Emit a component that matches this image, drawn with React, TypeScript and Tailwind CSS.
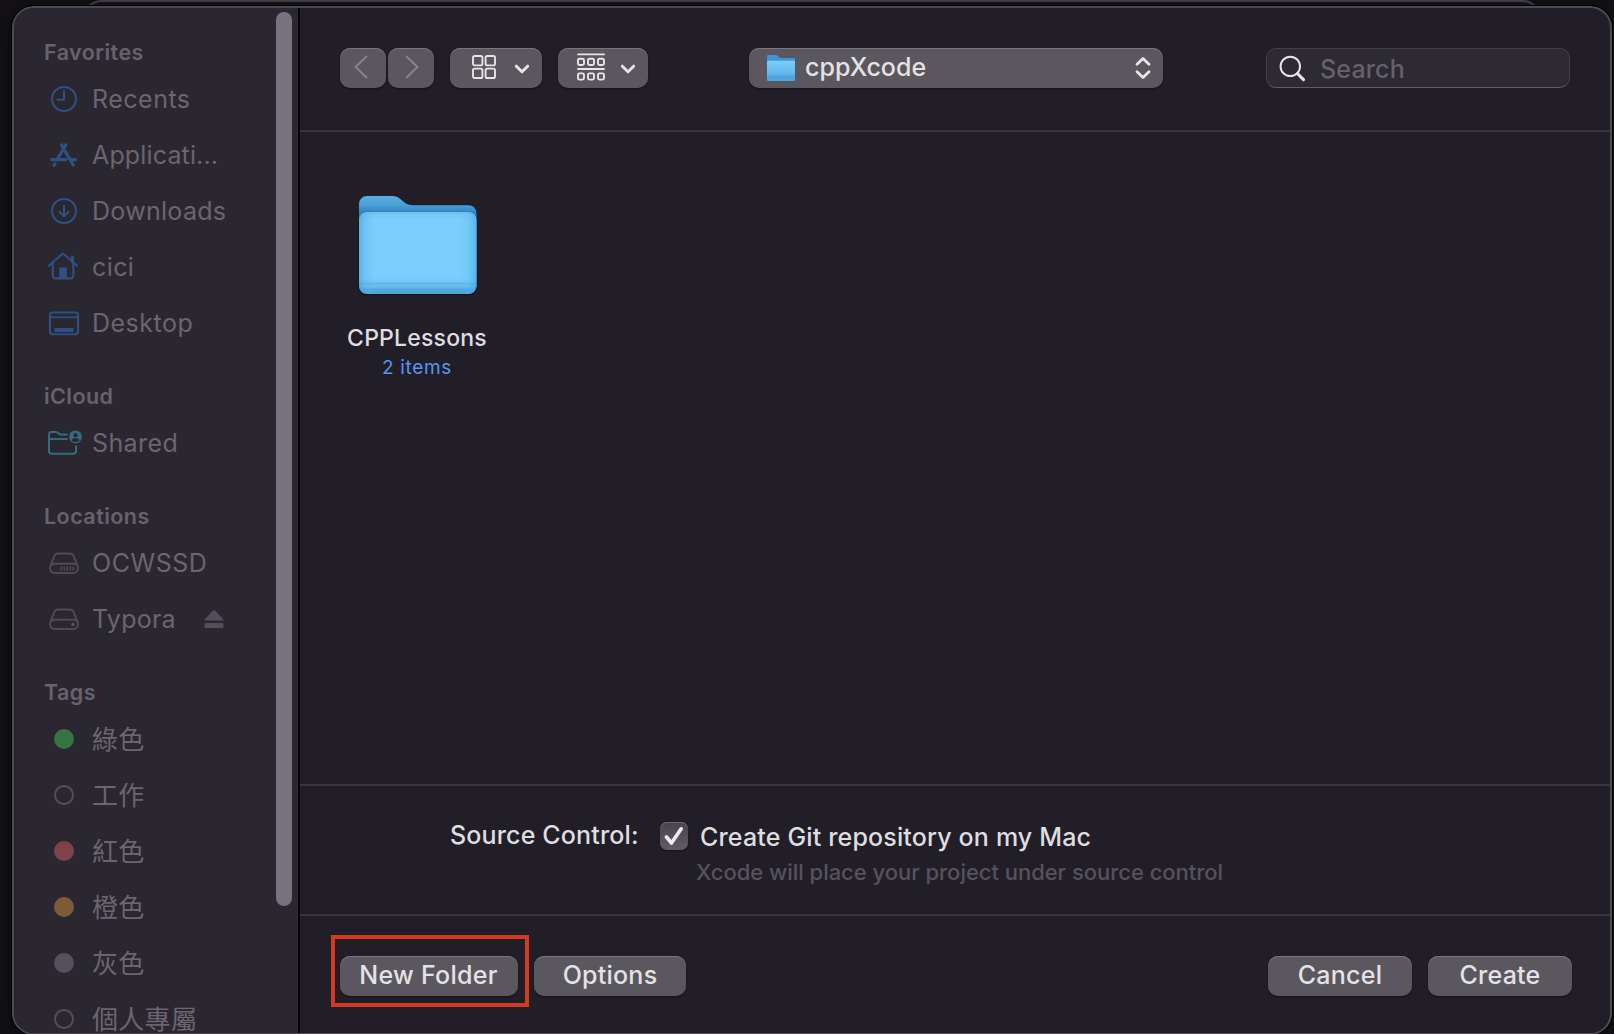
import type { ReactNode } from "react";

const ClockIcon = () => (
  <svg width="28" height="28" viewBox="0 0 28 28" fill="none" stroke="#2e5085" strokeWidth="2" strokeLinecap="round" strokeLinejoin="round">
    <circle cx="14" cy="14" r="12" />
    <path d="M14 6v8.7H7.5" />
  </svg>
);

const AppStoreIcon = () => (
  <svg width="28" height="28" viewBox="0 0 28 28" fill="none" stroke="#2e5085" strokeWidth="3.2" strokeLinecap="round">
    <path d="M1.7 18.6h14.200M21.600 18.6h3.800M11.600 3.800l1.800 2.800M15.800 3.800L7.700 17.600M15.200 10.200L23.200 24M5 22.800l-1 1.400" />
  </svg>
);

const DownloadIcon = () => (
  <svg width="28" height="28" viewBox="0 0 28 28" fill="none" stroke="#2e5085" strokeWidth="2" strokeLinecap="round" strokeLinejoin="round">
    <circle cx="14" cy="14" r="12" />
    <path d="M14 8.2v11M9.4 14.8l4.6 4.6 4.6-4.6" />
  </svg>
);

const HomeIcon = () => (
  <svg className="-mt-[3px] mr-[2px]" width="32" height="28" viewBox="0 0 32 28" fill="none" stroke="#2e5085" strokeWidth="2.100" strokeLinecap="round" strokeLinejoin="round">
    <path d="M2 13.8L14.9 2.3a1.6 1.6 0 0 1 2.2 0L30 13.8" />
    <path d="M5.800 11.5V24a2.4 2.4 0 0 0 2.4 2.4H23.900a2.4 2.4 0 0 0 2.4-2.4V11.5" />
    <path d="M12.300 26V16.2a.8.8 0 0 1 .8-.8h6a.8.8 0 0 1 .8.8V26z" fill="#2e5085" stroke="none" />
    <path d="M25.500 5v4.600" strokeWidth="3" />
  </svg>
);

const DesktopIcon = () => (
  <svg width="32" height="28" viewBox="0 0 32 28" fill="none" stroke="#2e5085" strokeWidth="2">
    <rect x="2" y="3.6" width="28" height="21.6" rx="2.6" />
    <path d="M2 8.2h28" strokeWidth="1.8" />
    <path d="M6.6 19h18.8v4H6.6z" fill="#2e5085" stroke="none" />
  </svg>
);

const SharedIcon = () => (
  <svg width="36" height="28" viewBox="0 0 36 28" fill="none" stroke="#376a7e" strokeWidth="2" strokeLinecap="butt" strokeLinejoin="round">
    <path d="M30 16.500v5.600a2.600 2.600 0 0 1-2.600 2.600H5.600A2.600 2.600 0 0 1 3 22.100V5.400A2.400 2.400 0 0 1 5.400 3h4.400c2.600 0 2.600 2.500 5.200 2.500h6.600M3 9.900h18.600" />
    <circle cx="29.500" cy="7.900" r="6.400" fill="#376a7e" stroke="none" />
    <circle cx="29.500" cy="6.200" r="2.100" fill="#2b2731" stroke="none" />
    <path d="M25.700 11.700c.3-3.600 7.300-3.600 7.600 0-1.800 1.700-5.800 1.700-7.600 0z" fill="#2b2731" stroke="none" />
  </svg>
);

const DriveIcon = ({ vents = false }: { vents?: boolean }) => (
  <svg width="32" height="28" viewBox="0 0 32 28" fill="none" stroke="#4f4a51" strokeWidth="2" strokeLinejoin="round">
    <path d="M2 19.200a4.400 4.400 0 0 1 4.400-4.400h19.200a4.400 4.400 0 0 1 4.400 4.400v0a4.700 4.700 0 0 1-4.700 4.700H6.700A4.700 4.700 0 0 1 2 19.200z" />
    <path d="M2.300 17.400L6.600 6.700C7.300 5.100 8.300 4.400 9.900 4.400h12.200c1.600 0 2.600.7 3.300 2.300l4.300 10.700" />
    {vents ? (
      <path d="M13.300 17.400v4M16.300 17.400v4M19.300 17.400v4M22.300 17.400v4M25.300 17.400v4" strokeWidth="1.700" />
    ) : (
      <circle cx="24.800" cy="19.400" r="1.700" fill="#5b555f" stroke="none" />
    )}
  </svg>
);

const EjectIcon = () => (
  <svg width="20" height="20" viewBox="0 0 20 20" fill="#534f5a">
    <path d="M9 1.600a1.400 1.400 0 0 1 2 0L19 10c.9 1 .6 1.600-.5 1.600h-17C.4 11.600.1 11 1 10z" />
    <rect x="0.500" y="14" width="19" height="5" rx="1.400" />
  </svg>
);

const Heading = ({ children }: { children: ReactNode }) => (
  <div className="flex h-[64px] shrink-0 items-end pb-[4px] pl-[30px] text-[21.5px] font-semibold leading-[30px] tracking-[0.45px] text-[#67626c]">
    {children}
  </div>
);

const Row = ({ icon, children, text = "tracking-[0.4px]" }: { icon: ReactNode; children: ReactNode; text?: string }) => (
  <div className="flex h-[56px] shrink-0 items-center">
    <span className="flex w-[100px] shrink-0 justify-center">{icon}</span>
    <span className={"-ml-[22px] flex items-center whitespace-nowrap text-[25px] leading-[32px] text-[#6a656f] " + text}>{children}</span>
  </div>
);

const tags = [
  { name: "綠色", dot: "bg-[#387345]" },
  { name: "工作", dot: "border-2 border-[#535054]" },
  { name: "紅色", dot: "bg-[#7e4348]" },
  { name: "橙色", dot: "bg-[#7c5c36]" },
  { name: "灰色", dot: "bg-[#55515c]" },
  { name: "個人專屬", dot: "border-2 border-[#535054]" },
];

const Sidebar = () => (
  <aside className="relative flex w-[286px] shrink-0 flex-col border-r-2 border-black bg-[#2b2731]">
    <div className="flex h-[1026px] w-[260px] flex-col overflow-hidden">
      <div className="-mt-px flex flex-col">
        <Heading>Favorites</Heading>
        <Row icon={<ClockIcon />} text="tracking-[0.5px]">Recents</Row>
        <Row icon={<AppStoreIcon />} text="tracking-[0.15px]">Applicati...</Row>
        <Row icon={<DownloadIcon />} text="tracking-[0.3px]">Downloads</Row>
        <Row icon={<HomeIcon />}>cici</Row>
        <Row icon={<DesktopIcon />} text="tracking-[0.5px]">Desktop</Row>
        <Heading>iCloud</Heading>
        <Row icon={<SharedIcon />}>Shared</Row>
        <Heading>Locations</Heading>
        <Row icon={<DriveIcon vents />} text="tracking-[0.55px]">OCWSSD</Row>
        <Row icon={<DriveIcon />} text="tracking-[0.25px]">
          Typora
          <span className="ml-[28px]">
            <EjectIcon />
          </span>
        </Row>
        <Heading>Tags</Heading>
        {tags.map((t) => (
          <Row key={t.name} icon={<span className={"h-5 w-5 rounded-full " + t.dot} />}>
            <span className="-mt-[3px] font-['Noto_Sans_CJK_TC',sans-serif] text-[26px] tracking-[0.3px]">{t.name}</span>
          </Row>
        ))}
      </div>
    </div>
    <div className="absolute left-[262px] top-[4px] h-[894px] w-[16px] rounded-full bg-[#77737e]" />
  </aside>
);

const raised =
  "flex h-10 shrink-0 items-center rounded-[10px] bg-[#5b575e] shadow-[inset_0_1px_0_#7a767d,0_1px_2px_rgba(0,0,0,0.45)]";

const Push = ({ width, children }: { width: string; children: ReactNode }) => (
  <button className={raised + " justify-center pb-[2px] text-[25px] font-medium leading-8 text-[#e4e2e5] " + width}>{children}</button>
);

const ChevronDown = () => (
  <svg width="16" height="10" viewBox="0 0 16 10" fill="none" stroke="#e6e4e7" strokeWidth="3" strokeLinecap="round" strokeLinejoin="round">
    <path d="M2.300 2.200L8 7.800l5.700-5.600" />
  </svg>
);

const GridIcon = () => (
  <svg width="24" height="24" viewBox="0 0 24 24" fill="none" stroke="#e6e4e7" strokeWidth="1.900">
    <rect x="1" y="1" width="9.400" height="9.400" rx="1.600" />
    <rect x="13.600" y="1" width="9.400" height="9.400" rx="1.600" />
    <rect x="1" y="13.600" width="9.400" height="9.400" rx="1.600" />
    <rect x="13.600" y="13.600" width="9.400" height="9.400" rx="1.600" />
  </svg>
);

const GroupIcon = () => (
  <svg width="28" height="28" viewBox="0 0 28 28" fill="none" stroke="#e6e4e7" strokeWidth="1.900" strokeLinecap="round">
    <path d="M1 1.400h26M1 16h26" />
    {[5.8, 20.4].map((y) =>
      [1, 11, 21].map((x) => <rect key={x + "-" + y} x={x} y={y} width="6" height="6.200" rx="1.500" />),
    )}
  </svg>
);

const SmallFolder = () => (
  <svg width="30" height="28" viewBox="0 0 30 28">
    <defs>
      <linearGradient id="small-front" x1="0" y1="0" x2="0" y2="1">
        <stop offset="0" stopColor="#7ccdf9" />
        <stop offset="0.500" stopColor="#67bdee" />
        <stop offset="1" stopColor="#4ea5dc" />
      </linearGradient>
    </defs>
    <path d="M1 2.200A1.200 1.200 0 0 1 2.200 1h8c2 0 2.400 3 5 3h12.600A1.200 1.200 0 0 1 29 5.200V20H1z" fill="#3d96d4" />
    <path d="M1 8a1.200 1.200 0 0 1 1.200-1.200h25.600A1.200 1.200 0 0 1 29 8v17.800a1.200 1.200 0 0 1-1.200 1.200H2.200A1.200 1.200 0 0 1 1 25.800z" fill="url(#small-front)" />
    <path d="M1 22.300h28M1 24.300h28" stroke="#4597cf" strokeWidth="0.700" />
  </svg>
);

const BigFolder = () => (
  <svg width="126" height="106" viewBox="0 0 126 106">
    <defs>
      <linearGradient id="back" x1="0" y1="0" x2="0" y2="1">
        <stop offset="0" stopColor="#5aaee2" />
        <stop offset="0.100" stopColor="#4a9fd9" />
        <stop offset="0.180" stopColor="#3583c4" />
        <stop offset="1" stopColor="#3583c4" />
      </linearGradient>
      <linearGradient id="front" x1="0" y1="0" x2="0" y2="1">
        <stop offset="0" stopColor="#6fc3f3" />
        <stop offset="0.090" stopColor="#79cefb" />
        <stop offset="0.800" stopColor="#79cefb" />
        <stop offset="0.855" stopColor="#72c6f4" />
        <stop offset="0.870" stopColor="#60b5e8" />
        <stop offset="0.890" stopColor="#6abfef" />
        <stop offset="0.925" stopColor="#62b7e9" />
        <stop offset="0.940" stopColor="#50a7de" />
        <stop offset="1" stopColor="#4ea5dc" />
      </linearGradient>
      <linearGradient id="edges">
        <stop offset="0" stopColor="#3d9ad6" stopOpacity="0.550" />
        <stop offset="0.060" stopColor="#55b0e6" stopOpacity="0.280" />
        <stop offset="0.140" stopColor="#6ac0f0" stopOpacity="0" />
        <stop offset="0.860" stopColor="#6ac0f0" stopOpacity="0" />
        <stop offset="0.940" stopColor="#55b0e6" stopOpacity="0.280" />
        <stop offset="1" stopColor="#3d9ad6" stopOpacity="0.550" />
      </linearGradient>
    </defs>
    <path d="M5 12a8 8 0 0 1 8-8h26c8.500 0 9.500 9.200 19.500 9.200H114.500a8 8 0 0 1 8 8V95H5z" fill="url(#back)" />
    <path
      d="M5 28a8 8 0 0 1 8-8h101.500a8 8 0 0 1 8 8V94a8 8 0 0 1-8 8H13a8 8 0 0 1-8-8z"
      fill="url(#front)"
      className="drop-shadow-[0_1px_1px_rgba(0,0,0,0.5)]"
    />
    <path d="M5 28a8 8 0 0 1 8-8h101.500a8 8 0 0 1 8 8V94a8 8 0 0 1-8 8H13a8 8 0 0 1-8-8z" fill="url(#edges)" />
  </svg>
);

const Toolbar = () => (
  <header className="flex h-[124px] shrink-0 items-start border-b-2 border-[#38343e] pl-10 pr-10 pt-10">
    <div className="flex gap-[2px]">
      <button className={raised + " w-[46px] justify-center"}>
        <svg className="-mt-[3px] mr-[4px]" width="14" height="24" viewBox="0 0 14 24" fill="none" stroke="#87838a" strokeWidth="2" strokeLinecap="round">
          <path d="M12.500 1.600L1.500 12l11 10.400" />
        </svg>
      </button>
      <button className={raised + " w-[46px] justify-center"}>
        <svg className="-mt-[3px] ml-[2px]" width="14" height="24" viewBox="0 0 14 24" fill="none" stroke="#87838a" strokeWidth="2" strokeLinecap="round">
          <path d="M1.500 1.600L12.500 12l-11 10.400" />
        </svg>
      </button>
    </div>
    <button className={raised + " ml-4 w-[92px] pl-[22px]"}>
      <span className="-mt-[2px]"><GridIcon /></span>
      <span className="ml-[18px] mt-[1px]"><ChevronDown /></span>
    </button>
    <button className={raised + " ml-4 w-[90px] pl-[19px]"}>
      <span className="-mt-[2px]"><GroupIcon /></span>
      <span className="ml-[15px] mt-[1px]"><ChevronDown /></span>
    </button>
    <button className={raised + " ml-[101px] w-[414px] pl-[17px] pr-[11px]"}>
      <SmallFolder />
      <span className="-mt-[3px] ml-[9px] text-[25px] font-medium leading-8 tracking-[0px] text-[#e4e2e5]">cppXcode</span>
      <svg className="ml-auto" width="18" height="24" viewBox="0 0 18 24" fill="none" stroke="#e6e4e7" strokeWidth="2.800" strokeLinecap="round" strokeLinejoin="round">
        <path d="M3 8.300L9 2.400l6 5.900M3 15.700l6 5.900 6-5.900" />
      </svg>
    </button>
    <div className="ml-auto flex h-10 w-[304px] items-center rounded-[10px] border border-[#423f47] border-b-[#5d5a60] bg-[#2d2a33] pl-[12px]">
      <svg width="27" height="27" viewBox="0 0 27 27" fill="none" stroke="#e6e4e7" strokeLinecap="round">
        <circle cx="11.300" cy="11.400" r="9.700" strokeWidth="2" />
        <path d="M18.500 18.600l6 6" strokeWidth="3" />
      </svg>
      <span className="ml-[14px] mt-[1px] text-[25px] font-[450] leading-8 tracking-[0.15px] text-[#65616a]">Search</span>
    </div>
  </header>
);

export default function App() {
  return (
    <div className="relative h-[1034px] w-[1614px] overflow-hidden bg-[#131116] font-['Inter','Noto_Sans_CJK_TC',sans-serif]">
      <div className="absolute left-[82px] top-0 h-[60px] w-[1460px] rounded-t-[20px] border-2 border-[#47444b] bg-[#17151b]" />
      <div className="relative ml-[12px] flex h-full w-[1600px] flex-col pt-[6px]">
        <div className="flex h-[1029px] shrink-0 overflow-hidden rounded-[22px] border-2 border-[#4c4950] bg-[#221e28] shadow-[0_0_0_1px_#000,0_4px_24px_rgba(0,0,0,0.5)]">
          <Sidebar />
          <main className="flex min-w-0 flex-1 flex-col">
            <Toolbar />
            <section className="flex h-[652px] shrink-0 items-start pl-[36px] pt-[60px]">
              <div className="flex w-[162px] flex-col items-center">
                <BigFolder />
                <span className="mt-[25px] text-[23px] font-medium leading-[30px] tracking-[0.2px] text-[#dfdde0]">CPPLessons</span>
                <span className="mt-[2px] text-[19px] leading-[26px] tracking-[0.7px] text-[#5796ee]">2 items</span>
              </div>
            </section>
            <section className="flex h-[132px] shrink-0 items-start border-y-2 border-[#38343e] pl-[150px]">
              <span className="mt-[33px] w-[208px] text-[25px] font-medium leading-8 tracking-[0.15px] text-[#dfdde0]">Source Control:</span>
              <span className="ml-[2px] mt-[36px] flex h-[28px] w-[28px] shrink-0 items-center justify-center rounded-[7px] bg-gradient-to-b from-[#48444d] to-[#605c65] shadow-[inset_0_1px_0_#6d6972,0_1px_2px_rgba(0,0,0,0.45)]">
                <svg width="20" height="20" viewBox="0 0 20 20" fill="none" stroke="#efedf0" strokeWidth="3.600" strokeLinecap="round" strokeLinejoin="round">
                  <path d="M2.500 11l5 6L17.200 2.800" />
                </svg>
              </span>
              <div className="flex flex-col">
                <span className="ml-[12px] mt-[35px] text-[25px] font-medium leading-8 tracking-[0.16px] text-[#dfdde0]">Create Git repository on my Mac</span>
                <span className="ml-[8px] mt-[4px] text-[22px] font-medium leading-[30px] tracking-[-0.03px] text-[#56525c]">Xcode will place your project under source control</span>
              </div>
            </section>
            <footer className="flex flex-1 items-start pl-[31px] pr-[38px] pt-[19px]">
              <div className="flex h-[72px] w-[198px] shrink-0 items-start border-4 border-[#d33a20] pl-[5px] pt-[17px]">
                <Push width="w-[178px] tracking-[0.3px] pr-[1px]">New Folder</Push>
              </div>
              <div className="ml-[5px] mt-[21px]">
                <Push width="w-[152px] tracking-[0.24px]">Options</Push>
              </div>
              <div className="ml-auto mt-[21px] flex gap-4">
                <Push width="w-[144px] tracking-[0.24px]">Cancel</Push>
                <Push width="w-[144px] tracking-[0.22px]">Create</Push>
              </div>
            </footer>
          </main>
        </div>
      </div>
    </div>
  );
}
